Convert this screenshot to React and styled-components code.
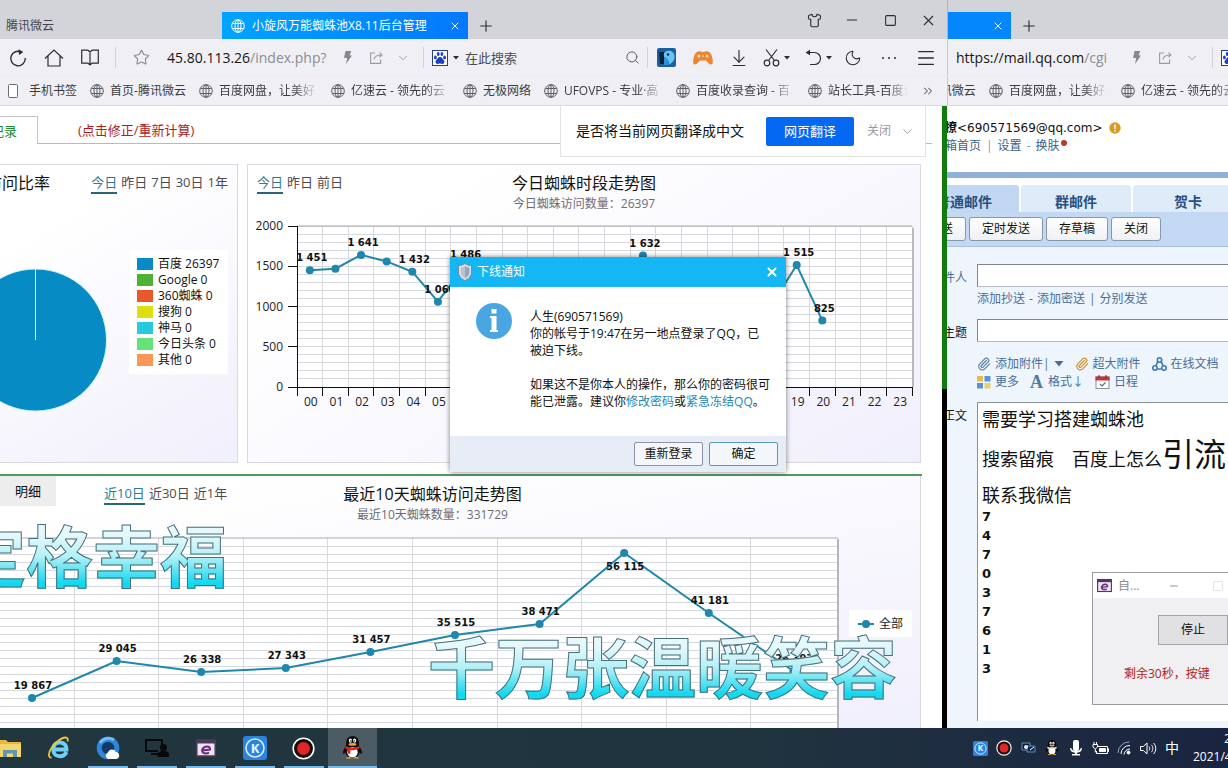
import React from 'react'
import styled, { createGlobalStyle, css } from 'styled-components'
import {
  ArrowDownToLine, ChevronDown, ChevronsRight, Menu, Minus, Moon, MoreHorizontal,
  Paperclip, Plus, Search, Shirt, Square, Star, X
} from 'lucide-react'

const ui = '"Open Sans", "Noto Sans CJK SC", sans-serif'

const GlobalStyle = createGlobalStyle`
  * { box-sizing: border-box; }
  body { margin: 0; overflow: hidden; background: #000; }
  body, button, input { font-family: ${ui}; font-size: 12px; line-height: 18px; color: #222; }
  button { margin: 0; padding: 0; border: 0; background: none; cursor: pointer; }
  a { text-decoration: none; color: inherit; }
  p, h2 { margin: 0; font-weight: 400; }
  svg { display: block; flex: none; }
`

/* ---------- desktop ---------- */

const Desktop = styled.div`
  position: relative;
  display: flex;
  flex-direction: column;
  height: 100vh;
  overflow: hidden;
`

const Windows = styled.div`
  flex: 1;
  min-height: 0;
  display: grid;
  grid-template-columns: minmax(0, 1fr) 281px;
`

const BrowserWindow = styled.section`
  display: flex;
  flex-direction: column;
  min-width: 0;
  overflow: hidden;
  background: #fff;
`

/* ---------- browser chrome ---------- */

const TabStrip = styled.div`
  display: flex;
  flex: none;
  height: 39px;
  background: #d3d4d9;
  border-left: ${p => p.$edge ? '1px solid #b4b5ba' : '0'};
`

const IdleTab = styled.button`
  flex: none;
  width: 222px;
  padding: 12px 0 0 6px;
  text-align: left;
  color: #44464c;
`

const ActiveTab = styled.div`
  display: flex;
  align-items: center;
  flex: none;
  gap: 7px;
  width: ${p => p.$short ? 63 : 246}px;
  margin-top: 12px;
  padding: 0 7px 0 9px;
  color: #fff;
  background: ${p => p.$short ? '#0486fd' : 'linear-gradient(90deg, #00a4ff, #0478fc)'};
  span { flex: 1; white-space: nowrap; }
`

const IconButton = styled.button`
  display: flex;
  align-items: center;
  justify-content: center;
  flex: none;
  gap: 4px;
  width: ${p => p.$w || 36}px;
  color: ${p => p.$color || '#2b2d33'};
`

const NewTabButton = styled(IconButton)`
  margin-top: 12px;
`

const WindowButtons = styled.div`
  display: flex;
  height: 40px;
  margin-left: auto;
`

const ToolBar = styled.div`
  display: flex;
  align-items: stretch;
  flex: none;
  height: 37px;
  overflow: hidden;
  background: #f0f0f4;
  border-left: ${p => p.$edge ? '1px solid #c8c9ce' : '0'};
`

const Divider = styled.i`
  flex: none;
  width: 1px;
  margin: 8px 7px;
  background: #d2d3d8;
`

const AddressBox = styled.div`
  display: flex;
  align-items: center;
  flex: none;
  width: 167px;
  margin-left: 8px;
  overflow: hidden;
  white-space: nowrap;
  font-size: 14px;
  color: #8a8c92;
  b { font-weight: 400; color: #15161a; }
`

const SearchInput = styled.input`
  flex: 1;
  min-width: 0;
  padding: 0 0 0 2px;
  border: 0;
  outline: 0;
  background: none;
  font-size: 13px;
  &::placeholder { color: #4a4c52; opacity: 1; }
`

const BookmarkBar = styled.nav`
  display: flex;
  align-items: center;
  flex: none;
  gap: 13px;
  height: 30px;
  padding-left: ${p => p.$edge ? 0 : 6}px;
  overflow: hidden;
  color: #3a3c42;
  background: #f0f0f4;
  border-left: ${p => p.$edge ? '1px solid #c8c9ce' : '0'};
  border-top: 1px solid #ececf0;
  border-bottom: 1px solid #dcdce0;
`

const Bookmark = styled.a`
  display: flex;
  align-items: center;
  flex: none;
  gap: 6px;
  color: #3a3c42;
  margin-left: ${p => p.$shift || 0}px;
  svg { color: #5d5f65; }
  span {
    width: ${p => p.$fade ? p.$fade + 'px' : 'auto'};
    overflow: hidden;
    white-space: nowrap;
    ${p => p.$fade && css`mask-image: linear-gradient(90deg, #000 75%, transparent);`}
  }
`

const MoreMarks = styled.button`
  display: flex;
  margin: 0 12px 0 auto;
`

/* ---------- statistics page ---------- */

const PageArea = styled.div`
  flex: 1;
  min-height: 0;
  display: flex;
`

const ScreenEdge = styled.div`
  flex: none;
  width: 5px;
  background: linear-gradient(#107c10 0 283px, #000 283px);
`

const Page = styled.main`
  position: relative;
  flex: 1;
  min-width: 0;
  display: flex;
  flex-direction: column;
  overflow: hidden;
  background: #fff;
`

const RecordRow = styled.div`
  display: flex;
  flex: none;
  height: 38px;
  padding-top: 10px;
  font-size: 13px;
  line-height: 28px;
`

const RecordTab = styled.button`
  flex: none;
  width: 38px;
  display: flex;
  justify-content: flex-end;
  overflow: hidden;
  padding-right: 20px;
  border: solid #c2c2c8;
  border-width: 1px 1px 0 0;
  font-size: 13px;
  line-height: 28px;
  color: #1f8a2c;
  white-space: nowrap;
`

const RecordNote = styled.div`
  flex: 1;
  margin-right: 10px;
  padding-left: 40px;
  border-bottom: 1px solid #b8b8bd;
  a { color: #b0201c; }
`

const TranslateBar = styled.div`
  position: absolute;
  top: 0;
  right: 16px;
  display: flex;
  align-items: center;
  width: 366px;
  height: 51px;
  padding: 0 10px 0 15px;
  background: #fff;
  border: 1px solid #e3e3e6;
  border-top: 0;
  font-size: 14px;
  color: #111;
  p { flex: 1; white-space: nowrap; }
`

const TranslateButton = styled.button`
  width: 88px;
  height: 29px;
  margin-right: 13px;
  border-radius: 2px;
  background: #0468f2;
  color: #fff;
  font-size: 13px;
`

const CloseText = styled.button`
  display: flex;
  align-items: center;
  gap: 9px;
  color: #9a9a9e;
`

const PanelRow = styled.div`
  display: grid;
  grid-template-columns: 238px minmax(0, 1fr);
  gap: 9px;
  flex: none;
  margin: 20px 21px 11px 0;
`

const Panel = styled.section`
  height: 299px;
  overflow: hidden;
  border: 1px solid #d9d8e0;
  border-left-width: ${p => p.$cut ? 0 : 1}px;
  background: linear-gradient(150deg, #fff 20%, #f0effc);
`

const PanelHead = styled.header`
  display: grid;
  grid-template-columns: ${p => p.$pie ? '50px 1fr' : '1fr auto 1fr'};
  align-items: start;
  padding: ${p => p.$pie ? '8px 9px 0 0' : '8px 9px 0'};
`

const PanelTitle = styled.div`
  text-align: center;
  white-space: nowrap;
  h2 { font-size: 16px; line-height: 20px; color: #111; }
  p { line-height: 22px; color: #6c6c74; }
`

const CutTitle = styled(PanelTitle)`
  display: flex;
  justify-content: flex-end;
  overflow: hidden;
`

const RangeLinks = styled.nav`
  display: flex;
  justify-content: ${p => p.$end ? 'flex-end' : 'flex-start'};
  gap: 4px;
  font-size: 13px;
  white-space: nowrap;
`

const RangeLink = styled.a`
  line-height: 19px;
  color: ${p => p.$on ? '#2e7a96' : '#4b4b50'};
  border-bottom: 2px solid ${p => p.$on ? '#2b6578' : 'transparent'};
`

const PieBody = styled.div`
  display: flex;
  align-items: flex-start;
  gap: 22px;
  padding-top: 56px;
  > svg { margin-top: 18px; }
`

const Legend = styled.ul`
  flex: 1;
  margin: 0 9px 0 0;
  padding: 6px 8px;
  list-style: none;
  background: #fff;
`

const LegendRow = styled.li`
  display: flex;
  align-items: center;
  gap: 5px;
  height: 16px;
  color: #111;
  white-space: nowrap;
  i { width: 16px; height: 12px; background: ${p => p.$color}; }
`

const ChartSvg = styled.svg`
  width: 100%;
  height: auto;
  font-family: ${ui};
  font-size: 12px;
`

const PointLabels = styled.g`
  fill: #111;
  font: 700 10px "DejaVu Sans", sans-serif;
  text-anchor: middle;
`

const TenDays = styled.section`
  flex: 1;
  min-height: 0;
  margin-right: 20px;
  overflow: hidden;
  border-top: 2px solid #4f9a5f;
`

const TenDaysBody = styled.div`
  height: 100%;
  margin-right: 1px;
  border-right: 1px solid #d9d8e0;
  background: linear-gradient(170deg, #fff 10%, #f0effc);
`

const TenDaysHead = styled.header`
  display: grid;
  grid-template-columns: 1fr auto 1fr;
  align-items: start;
  padding-right: 55px;
  margin-bottom: 11px;
  ${PanelTitle}, ${RangeLinks} { padding-top: 8px; }
`

const HeadLeft = styled.div`
  display: flex;
  align-items: flex-start;
  gap: 48px;
`

const DetailTab = styled.button`
  width: 56px;
  height: 30px;
  background: #ededee;
  font-size: 13px;
  color: #111;
`

const TenDaysChart = styled.div`
  display: flex;
  align-items: flex-start;
  gap: 7px;
  padding-right: 8px;
`

const ChartBox = styled.div`
  flex: 1;
  min-width: 0;
`

const SeriesKey = styled.div`
  display: flex;
  align-items: center;
  justify-content: center;
  gap: 5px;
  flex: none;
  width: 63px;
  height: 27px;
  margin-top: 73px;
  background: #fff;
`

const Lyric = styled.p`
  position: absolute;
  left: ${p => p.$left}px;
  top: ${p => p.$top}px;
  font: 700 67px/72px "Noto Sans CJK SC", sans-serif;
  white-space: nowrap;
  color: transparent;
  background: linear-gradient(#e6f8fb 25%, #b4f0f6 55%, #12d8f0 92%);
  background-clip: text;
  -webkit-text-stroke: 1px #47707c;
`

/* ---------- mail page ---------- */

const MailHead = styled.header`
  flex: none;
  height: 66px;
  padding-top: 13px;
  overflow: hidden;
  white-space: nowrap;
`

const MailUser = styled.div`
  display: flex;
  align-items: center;
  gap: 6px;
  margin-left: -2px;
  font-family: "DejaVu Sans", "Noto Sans CJK SC", sans-serif;
  color: #111;
`

const MailLinks = styled.div`
  display: flex;
  gap: 5px;
  margin-left: -14px;
  color: #8a97a8;
  a { color: #3a5f8c; }
  i { width: 6px; height: 6px; margin: 3px 0 0 -4px; border-radius: 3px; background: #b8392c; }
`

const MailTabs = styled.nav`
  display: flex;
  align-items: flex-end;
  flex: none;
  gap: 2px;
  height: 40px;
  border-top: 6px solid #8fb0d9;
  overflow: hidden;
`

const MailTab = styled.button`
  flex: none;
  width: 110px;
  height: 27px;
  padding-top: 6px;
  border-radius: 3px 3px 0 0;
  background: ${p => p.$on ? '#c2d8f2' : '#dfebf9'};
  font-size: 14px;
  font-weight: 700;
  color: #2a5080;
  &:first-child { margin-left: -38px; }
`

const MailActions = styled.div`
  display: flex;
  align-items: center;
  flex: none;
  gap: 3px;
  height: 35px;
  overflow: hidden;
  background: #c3d8f2;
  border-bottom: 1px solid #aac1dd;
`

const MailButton = styled.button`
  flex: none;
  width: ${p => p.$w}px;
  height: 24px;
  border: 1px solid #8897aa;
  border-radius: 3px;
  background: linear-gradient(#fff, #f0f1f4);
  color: #111;
  &:first-child { margin-left: -31px; }
`

const MailForm = styled.form`
  flex: 1;
  min-height: 0;
  display: grid;
  grid-template-columns: 20px minmax(0, 1fr);
  grid-template-rows: 55px auto 1fr;
  column-gap: 10px;
  padding: 17px 0 7px;
  background: #eef5fd;
`

const FieldLabel = styled.label`
  display: flex;
  justify-content: flex-end;
  overflow: hidden;
  padding-top: 5px;
  white-space: nowrap;
  color: ${p => p.$link ? '#4a6e98' : '#111'};
`

const MailInput = styled.input`
  display: block;
  width: 100%;
  height: 23px;
  border: 1px solid #80868e;
  border-right: 0;
  border-bottom-color: #b5bcc6;
  border-radius: 0;
  background: #fff;
`

const CcLinks = styled.div`
  display: flex;
  gap: 4px;
  margin-top: 3px;
  white-space: nowrap;
  color: #4a6e98;
`

const AttachTools = styled.div`
  margin: 13px 0 11px;
`

const ToolRow = styled.div`
  display: flex;
  gap: 11px;
  overflow: hidden;
`

const Tool = styled.a`
  display: flex;
  align-items: center;
  flex: none;
  gap: 4px;
  color: #4a6e98;
`

const Editor = styled.div`
  min-height: 0;
  padding: 1px 4px;
  overflow: hidden;
  border: 1px solid #8a9098;
  border-width: 1px 0 0 1px;
  background: #fff;
  color: #111;
  white-space: nowrap;
  font-size: 18px;
  outline: 0;
`

const EditorLine = styled.p`
  line-height: ${p => p.$h}px;
  big { font-size: 32px; line-height: 40px; }
`

const EditorDigit = styled.p`
  font: 700 13px/19px "DejaVu Sans", sans-serif;
`

/* ---------- floating windows ---------- */

const Notice = styled.div`
  position: absolute;
  left: 450px;
  top: 257px;
  display: flex;
  flex-direction: column;
  width: 336px;
  height: 215px;
  background: #fff;
  box-shadow: 0 0 5px rgba(0, 0, 0, .5);
`

const NoticeTitle = styled.div`
  display: flex;
  align-items: center;
  gap: 5px;
  height: 30px;
  padding: 0 6px 0 8px;
  background: #14b6f4;
  color: #fff;
  span { flex: 1; }
`

const NoticeBody = styled.div`
  flex: 1;
  display: flex;
  gap: 18px;
  padding: 16px 0 0 26px;
  color: #111;
  white-space: nowrap;
  div { padding-top: 5px; }
  p { line-height: 17px; margin-bottom: 17px; }
  a { color: #2a86ac; }
`

const NoticeFoot = styled.div`
  display: flex;
  align-items: center;
  justify-content: flex-end;
  gap: 6px;
  height: 36px;
  padding-right: 8px;
  background: #e6edf7;
`

const NoticeButton = styled.button`
  width: 69px;
  height: 24px;
  border: 1px solid ${p => p.$main ? '#5a9cb8' : '#8d90a6'};
  border-radius: 2px;
  background: #f3f6fb;
  color: #111;
`

const Helper = styled.div`
  position: absolute;
  right: 0;
  top: 572px;
  width: 136px;
  height: 133px;
  overflow: hidden;
  border: 1px solid #9b9b9f;
  border-right: 0;
  background: #f0eff1;
`

const HelperTitle = styled.div`
  display: flex;
  align-items: center;
  gap: 6px;
  height: 25px;
  padding: 0 4px;
  background: #fff;
  color: #8b8b8f;
  span { flex: 1; }
  svg:nth-of-type(2) { margin-right: 26px; }
`

const HelperButton = styled.button`
  display: block;
  width: 70px;
  height: 30px;
  margin: 17px 0 0 auto;
  border: 1px solid #a3a3a8;
  background: #e1e0e3;
  color: #111;
`

const HelperNote = styled.p`
  margin: 20px 0 0 31px;
  color: #b01f22;
`

/* ---------- taskbar ---------- */

const TaskBar = styled.footer`
  display: flex;
  flex: none;
  height: 40px;
  overflow: hidden;
  background: linear-gradient(90deg, #22363f, #20343f 60%, #1a2440);
`

const TaskButton = styled.button`
  display: flex;
  align-items: center;
  justify-content: center;
  flex: none;
  width: 49px;
  background: ${p => p.$on ? '#4b5c64' : 'none'};
  box-shadow: ${p => p.$on ? 'inset 0 -2px #76b9ed' : 'none'};
  &:first-child { margin-left: -15px; }
  ${p => p.$open && css`
    background: linear-gradient(#76b9ed, #76b9ed) center bottom / 40px 2px no-repeat;
  `}
`

const Tray = styled.div`
  display: flex;
  align-items: center;
  margin-left: auto;
  color: #fff;
`

const TrayButton = styled.button`
  display: flex;
  align-items: center;
  justify-content: center;
  width: 24px;
  color: #fff;
  font-size: 14px;
`

const Clock = styled.div`
  width: 44px;
  margin-left: 9px;
  margin-right: -9px;
  font-size: 12px;
  text-align: left;
  white-space: nowrap;
  time { display: block; }
  time:first-child { padding-left: 31px; }
`

/* ---------- icons ---------- */

const GlobeIcon = () => (
  <svg width="14" height="14" viewBox="0 0 14 14" fill="none" stroke="currentColor">
    <circle cx="7" cy="7" r="6.3" />
    <ellipse cx="7" cy="7" rx="3" ry="6.3" />
    <path d="M7 .7v12.6M1.4 4.5h11.2M1.4 9.5h11.2" />
  </svg>
)

const ReloadIcon = () => (
  <svg width="18" height="18" viewBox="0 0 18 18" fill="none" stroke="currentColor" strokeWidth="1.4">
    <path d="M12.6 3.2A7.3 7.3 0 1 0 16.3 9" />
    <path d="M9.4 .2l5 2.7-4.4 3.2z" fill="currentColor" stroke="none" />
  </svg>
)

const HomeIcon = () => (
  <svg width="20" height="18" viewBox="0 0 20 18" fill="none" stroke="currentColor" strokeWidth="1.2">
    <path d="M1 9.5L10 1l9 8.5M4 7v10h12V7" />
  </svg>
)

const BookIcon = () => (
  <svg width="18" height="17" viewBox="0 0 18 17" fill="none" stroke="currentColor" strokeWidth="1.2">
    <path d="M.7 1.2h6.2L9 3l2.1-1.8h6.2v13H11L9 16l-2-1.8H.7zM9 3v13" />
  </svg>
)

const BoltIcon = () => (
  <svg width="8" height="13" viewBox="0 0 8 13" fill="#85878d">
    <path d="M1.6 0h5.6L5.6 4.6H8L2 13l1.2-6H0z" />
  </svg>
)

const ShareIcon = () => (
  <svg width="13" height="12" viewBox="0 0 13 12" fill="none" stroke="#9a9ca2" strokeWidth="1.1">
    <path d="M5 1H.6v10.4h10V7.6M4 7.4C4.4 4.6 6.4 3 11.6 3M9.4 .6L12 3 9.4 5.4" />
  </svg>
)

const PawIcon = () => (
  <svg width="16" height="16" viewBox="0 0 16 16">
    <rect x=".5" y=".5" width="15" height="15" fill="#fff" stroke="#25408f" />
    <g fill="#1c3fc0">
      <ellipse cx="3.4" cy="7.4" rx="1.4" ry="1.9" />
      <ellipse cx="6.2" cy="4.1" rx="1.4" ry="2" />
      <ellipse cx="9.9" cy="4.1" rx="1.4" ry="2" />
      <ellipse cx="12.6" cy="7.4" rx="1.4" ry="1.9" />
      <path d="M8 7c2 0 2.6 2 3.9 3.2 1.3 1.4.4 3.7-1.5 3.7-1 0-1.5-.4-2.4-.4s-1.4.4-2.4.4c-1.9 0-2.8-2.3-1.5-3.7C5.4 9 6 7 8 7z" />
    </g>
  </svg>
)

const Caret = ({ w = 6 }) => (
  <svg width={w} height={w / 2 + 1} viewBox="0 0 6 4" fill="currentColor"><path d="M0 0h6L3 3.6z" /></svg>
)

const PictureIcon = () => (
  <svg width="19" height="19" viewBox="0 0 19 19">
    <rect width="19" height="19" rx="2" fill="#1b5f9e" />
    <path d="M2 4h6l-1 12H3z" fill="#0b2140" />
    <path d="M7 5c4-4 10-2 10.5 3 .5 4-2 7-6 9 1-3 0-5-3-6-1.5-1-2-4-1.500-6z" fill="#63c6f5" />
    <path d="M7 9c3 0 5 3 4 8H7z" fill="#2b93d8" />
    <circle cx="11" cy="6.5" r="1.2" fill="#0b2140" />
  </svg>
)

const GameIcon = () => (
  <svg width="20" height="14" viewBox="0 0 20 14">
    <path d="M5 .5C7 0 8 1 10 1s3-1 5-.5c3.5 1 5 7 4.8 11-.3 2.5-2.3 2.7-4 1L13 9.5H7l-2.8 3c-1.7 1.7-3.7 1.5-4-1C0 7.5 1.5 1.5 5 .5z" fill="#ef8530" />
    <circle cx="6" cy="5" r="1.5" fill="#ffe6cc" /><circle cx="14" cy="5" r="1.5" fill="#ffe6cc" />
    <circle cx="10" cy="5" r="1" fill="#ffd9b0" />
  </svg>
)

const ScissorsIcon = () => (
  <svg width="17" height="18" viewBox="0 0 17 18" fill="none" stroke="currentColor" strokeWidth="1.2">
    <circle cx="4" cy="14" r="2.8" /><circle cx="13" cy="14" r="2.8" />
    <path d="M3 .5l8.500 11M14 .5L5.5 11.5" />
  </svg>
)

const UndoIcon = () => (
  <svg width="17" height="17" viewBox="0 0 17 17" fill="none" stroke="currentColor" strokeWidth="1.2">
    <path d="M3 3.5h6.5a6 6 0 1 1 0 12H5" />
    <path d="M.5 3.5L5 .7v5.6z" fill="currentColor" stroke="none" />
  </svg>
)

const DotsIcon = () => (
  <svg width="16" height="4" viewBox="0 0 16 4" fill="currentColor">
    <circle cx="2" cy="2" r="1" /><circle cx="8" cy="2" r="1" /><circle cx="14" cy="2" r="1" />
  </svg>
)

const PhoneIcon = () => (
  <svg width="17" height="14" viewBox="0 0 17 14" fill="#fff" stroke="#6b6d73">
    <rect x="2.5" y=".5" width="9" height="13" rx="1" />
  </svg>
)

const ShieldIcon = () => (
  <svg width="14" height="18" viewBox="0 0 14 18">
    <path d="M7 .5c2 1.5 4 2 6.5 2V9c0 4-3 7-6.5 8.5C3.5 16 .5 13 .5 9V2.5C3 2.5 5 2 7 .5z" fill="#dfe3ea" stroke="#7d8796" />
    <path d="M7 3c1.3.9 2.6 1.3 4.5 1.4V9c0 3-2 5-4.5 6.2z" fill="#9aa6b8" />
    <path d="M7 3C5.7 3.9 4.4 4.3 2.5 4.4V9c0 3 2 5 4.5 6.2z" fill="#b9c4d3" />
  </svg>
)

const InfoIcon = () => (
  <svg width="36" height="36" viewBox="0 0 36 36">
    <circle cx="18" cy="18" r="18" fill="#4aa6e2" />
    <path d="M15.500 6h5v4.500h-5zM15.500 13h5v16h-5z" fill="#fff" />
    <path d="M14 13h2v2h-2zM14 27h8v2h-8z" fill="#fff" />
  </svg>
)

const ScriptIcon = ({ size = 16 }) => (
  <svg width={size} height={size} viewBox="0 0 20 20">
    <rect x=".8" y="2" width="18.4" height="16" fill="#efe3f2" stroke="#4d3a5a" strokeWidth="1.5" />
    <path d="M1 2h18v3.5H1z" fill="#4d3a5a" />
    <path d="M6 12.5l8-1c.5-4-5.5-4-7.5-.5-1.5 3.5 2 5.5 6.5 3.8" fill="none" stroke="#6c2a80" strokeWidth="2" />
  </svg>
)

const ShareDocIcon = () => (
  <svg width="15" height="14" viewBox="0 0 15 14" fill="none" stroke="#3d78b8" strokeWidth="1.6">
    <circle cx="7.5" cy="3" r="2.2" /><circle cx="3" cy="11" r="2.2" /><circle cx="12" cy="11" r="2.2" />
    <path d="M5.8 4.6L3.8 8.8M9.2 4.6l2 4.2M5.5 12h4" />
  </svg>
)

const TilesIcon = () => (
  <svg width="14" height="14" viewBox="0 0 14 14">
    <path d="M0 1h6v5.5H0z" fill="#e8b94f" /><path d="M7.5 1h6v5.5h-6z" fill="#5f93cf" />
    <path d="M0 8h6v5.5H0z" fill="#5f93cf" /><path d="M7.5 8h6v5.5h-6z" fill="#e8cf6f" />
  </svg>
)

const FormatIcon = () => (
  <svg width="14" height="14" viewBox="0 0 14 14">
    <text x="0" y="13" fontFamily="Liberation Serif, serif" fontWeight="700" fontSize="18" fill="#4d7c9c">A</text>
  </svg>
)

const CalendarIcon = () => (
  <svg width="15" height="14" viewBox="0 0 15 14">
    <rect x="1" y="2" width="13" height="11.5" fill="#fff" stroke="#8a8f99" />
    <path d="M.5 1.5h14v4H.5z" fill="#c2373c" />
    <path d="M4 0v3M11 0v3" stroke="#6b2024" />
    <path d="M5 9l2 2 3.5-3.5" fill="none" stroke="#5f6c80" strokeWidth="1.2" />
  </svg>
)

const WarnIcon = () => (
  <svg width="12" height="12" viewBox="0 0 12 12">
    <circle cx="6" cy="6" r="5.7" fill="#dc9a1e" />
    <path d="M5.2 2.5h1.6V7H5.2zM5.2 8h1.6v1.6H5.2z" fill="#fff" />
  </svg>
)

const FolderIcon = () => (
  <svg width="24" height="20" viewBox="0 0 24 20">
    <path d="M0 2h8l2 2h13v15H0z" fill="#e8b83e" /><path d="M0 6h23v13H0z" fill="#f7d56e" />
    <path d="M5 19v-7h14v7h-4v-3.5H9V19z" fill="#5e97b5" />
  </svg>
)

const IeIcon = () => (
  <svg width="24" height="24" viewBox="0 0 24 24" fill="none">
    <path d="M19.5 16c-1.5 3-4 4.5-7 4.3-4-.3-6.5-3.5-6.3-7.5.3-4 3.3-6.5 7-6.3 4 .2 6.600 3 6.300 7H7" stroke="#6fd0f3" strokeWidth="4" />
    <path d="M4.5 21.5C1 22 1 17 4.5 12 9 5 17 0 20 2c1 .7 1 2 .4 3.5" stroke="#ecc739" strokeWidth="1.8" />
  </svg>
)

const QBrowserIcon = () => (
  <svg width="24" height="24" viewBox="0 0 24 24">
    <circle cx="12" cy="12" r="8.8" fill="#123a66" stroke="#2f86dc" strokeWidth="5" />
    <path d="M4 7a10 10 0 0 1 14-3" stroke="#6fbdf7" strokeWidth="3" fill="none" />
    <path d="M12 23a3.5 3.5 0 0 1 0-6.5c1-4 6.5-4 7.5-.8C24 16 24.5 22 20.5 23z" fill="#fff" />
  </svg>
)

const RemoteIcon = () => (
  <svg width="24" height="20" viewBox="0 0 24 20" fill="#07090b">
    <path d="M0 1h18v7h-2V3H2v9h11v2H0zM6 15h7v2H6z" />
    <circle cx="18.5" cy="9.5" r="3.5" /><path d="M12.5 19v-2c0-3 2-4 6-4s5.5 1 5.5 4v2z" />
  </svg>
)

const KIcon = ({ size = 24 }) => (
  <svg width={size} height={size} viewBox="0 0 24 24">
    <rect width="24" height="24" rx="3" fill="#2b83df" />
    <circle cx="12" cy="12" r="9" fill="none" stroke="#cfeeff" strokeWidth="1.6" />
    <text x="12" y="16.5" textAnchor="middle" fontFamily="Open Sans, sans-serif" fontWeight="700" fontSize="13" fill="#e6f8ff">K</text>
  </svg>
)

const RecordIcon = ({ size = 23 }) => (
  <svg width={size} height={size} viewBox="0 0 23 23">
    <circle cx="11.5" cy="11.5" r="10.3" fill="#1a0c0c" stroke="#fff" strokeWidth="1.6" />
    <circle cx="11.5" cy="11.5" r="6.5" fill="#e0262b" />
  </svg>
)

const PenguinIcon = ({ w = 21, scarf = '#d8262c' }) => (
  <svg width={w} height={w * 1.1} viewBox="0 0 20 22">
    <path d="M10 0c4 0 6 3 6 6.5 0 2 0 2.5 1.5 5 1 1.7 2 4 1.3 5.5-.6.5-1.3-.3-2-1.5C16 19 13.500 21 10 21s-6-2-6.8-5.5c-.7 1.2-1.4 2-2 1.5-.7-1.5.3-3.8 1.3-5.5C4 9 4 8.5 4 6.5 4 3 6 0 10 0z" fill="#0b0b0d" />
    <ellipse cx="10" cy="15.5" rx="5" ry="5" fill="#fff" />
    <ellipse cx="8" cy="4.5" rx="1.5" ry="2" fill="#fff" /><ellipse cx="12" cy="4.5" rx="1.5" ry="2" fill="#fff" />
    <circle cx="8.4" cy="4.8" r=".7" /><circle cx="11.6" cy="4.8" r=".7" />
    <ellipse cx="10" cy="8" rx="3.8" ry="1.3" fill="#eea42a" />
    <path d="M3.6 9.5c4 2 8.8 2 12.8 0l.6 2.2c-4 2-6.5 2-9 1.8V17H5.5v-4L3 11.8z" fill={scarf} />
    <path d="M4 21.5c0-2 4-2 5.5 0zM10.5 21.5c1.5-2 5.5-2 5.5 0z" fill="#eea42a" />
  </svg>
)

const MonitorsIcon = () => (
  <svg width="15" height="14" viewBox="0 0 15 14">
    <path d="M1 2h8v7H1z" fill="#0c1a30" stroke="#6a8fb8" /><path d="M6 5h8v6H6z" fill="#0f2748" stroke="#5f88b8" />
    <circle cx="5" cy="6" r="2" fill="#e8f0f8" /><path d="M9 9l4-3" stroke="#fff" />
  </svg>
)

const MicIcon = () => (
  <svg width="12" height="16" viewBox="0 0 12 16" fill="#fff">
    <rect x="3" width="6" height="11" rx="2" /><path d="M0 8h1.2c.4 4 9.2 4 9.6 0H12c0 3-2 4.5-5 4.8V14h3v1.5H2V14h3v-1.2C2 12.5 0 11 0 8z" />
  </svg>
)

const PowerIcon = () => (
  <svg width="17" height="13" viewBox="0 0 17 13" fill="none" stroke="#fff">
    <path d="M5 4.5h10.5v7H4.5V9M15.5 6.500h1v3h-1" /><path d="M7.5 6.5h6v3h-6z" fill="#fff" />
    <path d="M1 2.5h4.5V5L3.3 7 1 5zM2 0v2.5M4.5 0v2.5M3.3 7v3h1" />
  </svg>
)

const WifiIcon = () => (
  <svg width="14" height="14" viewBox="0 0 14 14" fill="none" stroke="#fff">
    <path d="M1 12A11 11 0 0 1 12.5 1" stroke="#9aa5b0" /><path d="M4 13a8.5 8.5 0 0 1 9-8.5M7 13.5a6 6 0 0 1 6-5.5" />
    <circle cx="11.5" cy="11.5" r="1.5" fill="#fff" />
  </svg>
)

const SpeakerIcon = () => (
  <svg width="17" height="13" viewBox="0 0 17 13" fill="none" stroke="#fff">
    <path d="M.5 4.5h2.8L7 1v11L3.3 8.5H.5zM9 4.5c1 1 1 3 0 4M11.3 2.8c2 2 2 5.5 0 7.4M13.5 1c3 3 3 8 0 11" />
  </svg>
)

/* ---------- data ---------- */

const bookmarks = [
  { text: '首页-腾讯微云' },
  { text: '百度网盘，让美好', fade: 99 },
  { text: '亿速云 - 领先的云', fade: 99 },
  { text: '无极网络' },
  { text: 'UFOVPS - 专业·高', fade: 99 },
  { text: '百度收录查询 - 百', fade: 99 },
  { text: '站长工具-百度词', fade: 80 }
]

const engines = [
  ['百度 26397', '#078bc4'],
  ['Google 0', '#50b033'],
  ['360蜘蛛 0', '#e8582a'],
  ['搜狗 0', '#dddf10'],
  ['神马 0', '#28c9e0'],
  ['今日头条 0', '#66e27b'],
  ['其他 0', '#fa9658']
]

const hourly = [1451, 1470, 1641, 1560, 1432, 1060, 1486, 1300, 1250, 1320, 1280, 1350, 1400, 1632, 1450, 1380, 1300, 1200, 1010, 1515, 825]
const hourlyLabels = [0, 2, 4, 5, 6, 13, 19, 20]

const daily = [
  ['19 867', 161], ['29 045', 124], ['26 338', 135], ['27 343', 131], ['31 457', 115],
  ['35 515', 98], ['38 471', 87], ['56 115', 16], ['41 181', 76], ['26 397', 134]
]

const digits = ['7', '4', '7', '0', '3', '7', '6', '1', '3']

const range = n => Array.from({ length: n }, (_, i) => i)
const blue = '#1f86ac'

/* ---------- parts ---------- */

function HourChart() {
  const left = 49, right = 664, top = 11, bottom = 172
  const step = (right - left) / 24
  const x = i => left + step * (i + 0.5)
  const y = v => bottom - v * (bottom - top) / 2000
  return (
    <ChartSvg viewBox="0 0 672 200">
      <rect x={left} y={top} width={right - left} height={bottom - top} fill="#fff" />
      <g stroke="#d8d8e0" shapeRendering="crispEdges">
        {range(20).map(i => <path key={i} d={`M${left} ${y(i * 100 + 100)}H${right}`} />)}
        {range(24).map(i => <path key={i} d={`M${left + step * (i + 1)} ${top}V${bottom}`} />)}
      </g>
      <path d={`M${left} ${top}H${right}`} stroke="#a9a9b0" />
      <path d={`M${right + 1} ${top + 2}V${bottom}`} stroke="#b9b9be" strokeWidth="2" />
      <g stroke="#111" shapeRendering="crispEdges">
        <path d={`M${left} ${top}V${bottom}H${right}`} fill="none" />
        {range(5).map(i => <path key={i} d={`M${left - 9} ${y(i * 500)}H${left}`} />)}
        {range(25).map(i => <path key={i} d={`M${left + step * i} ${bottom}v9`} />)}
      </g>
      <g fill="#222" textAnchor="end">
        {range(5).map(i => <text key={i} x={left - 14} y={y(i * 500) + 4}>{i * 500}</text>)}
      </g>
      <g fill="#222" textAnchor="middle">
        {range(24).map(i => <text key={i} x={x(i) + 1} y={bottom + 19}>{String(i).padStart(2, '0')}</text>)}
      </g>
      <polyline points={hourly.map((v, i) => `${x(i)},${y(v)}`).join(' ')} fill="none" stroke={blue} strokeWidth="2" />
      {hourly.map((v, i) => <circle key={i} cx={x(i)} cy={y(v)} r="4" fill={blue} />)}
      <PointLabels>
        {hourlyLabels.map(i => (
          <text key={i} x={x(i) + 2} y={y(hourly[i]) - 9}>{String(hourly[i]).replace(/^(\d)(\d{3})$/, '$1 $2')}</text>
        ))}
      </PointLabels>
    </ChartSvg>
  )
}

function DayChart() {
  const xs = daily.map((_, i) => 32 + i * 84.6)
  return (
    <ChartSvg viewBox="0 0 842 200">
      <rect width="838" height="200" fill="#fff" />
      <g stroke="#d8d8e0" shapeRendering="crispEdges">
        {range(24).map(i => <path key={i} d={`M0 ${9 + i * 8}H838`} />)}
        {range(9).map(i => <path key={i} d={`M${74 + i * 84.6} 1V200`} />)}
      </g>
      <path d="M0 1H838" stroke="#a9a9b0" />
      <path d="M838 2V200" stroke="#b5b5bb" strokeWidth="2" />
      <polyline points={daily.map((d, i) => `${xs[i]},${d[1]}`).join(' ')} fill="none" stroke={blue} strokeWidth="2" />
      {daily.map((d, i) => <circle key={i} cx={xs[i]} cy={d[1]} r="4" fill={blue} />)}
      <PointLabels>
        {daily.map((d, i) => <text key={i} x={xs[i] + 1} y={i === 7 ? d[1] + 17 : d[1] - 9}>{d[0]}</text>)}
      </PointLabels>
    </ChartSvg>
  )
}

function Marks({ items, shift }) {
  return items.map((b, i) => (
    <Bookmark key={b.text} href="#" $fade={b.fade} $shift={i === 0 ? shift : 0}>
      <GlobeIcon /><span>{b.text}</span>
    </Bookmark>
  ))
}

function AddressTools() {
  return (
    <>
      <IconButton $w={28} aria-label="加速"><BoltIcon /></IconButton>
      <IconButton $w={28} aria-label="分享"><ShareIcon /></IconButton>
      <IconButton $w={26} $color="#9a9ca2" aria-label="展开"><ChevronDown size={14} strokeWidth={1.6} /></IconButton>
      <Divider />
      <IconButton $w={18} aria-label="百度"><PawIcon /></IconButton>
    </>
  )
}

function StatsWindow() {
  return (
    <BrowserWindow>
      <TabStrip>
        <IdleTab>腾讯微云</IdleTab>
        <ActiveTab>
          <GlobeIcon /><span>小旋风万能蜘蛛池X8.11后台管理</span>
          <IconButton $w={12} $color="#fff" aria-label="关闭标签"><X size={12} strokeWidth={2} /></IconButton>
        </ActiveTab>
        <NewTabButton aria-label="新标签"><Plus size={18} strokeWidth={1.5} /></NewTabButton>
        <WindowButtons>
          <IconButton $w={38} aria-label="皮肤"><Shirt size={15} strokeWidth={1.8} /></IconButton>
          <IconButton $w={38} aria-label="最小化"><Minus size={16} strokeWidth={1.5} /></IconButton>
          <IconButton $w={38} aria-label="最大化"><Square size={13} strokeWidth={2} /></IconButton>
          <IconButton $w={38} aria-label="关闭"><X size={17} strokeWidth={1.5} /></IconButton>
        </WindowButtons>
      </TabStrip>
      <ToolBar>
        <IconButton aria-label="刷新"><ReloadIcon /></IconButton>
        <IconButton aria-label="主页"><HomeIcon /></IconButton>
        <IconButton aria-label="阅读"><BookIcon /></IconButton>
        <Divider />
        <IconButton $color="#8a8c92" aria-label="收藏"><Star size={17} strokeWidth={1.6} /></IconButton>
        <AddressBox><b>45.80.113.26</b>/index.php?</AddressBox>
        <AddressTools />
        <IconButton $w={14} aria-label="切换引擎"><Caret /></IconButton>
        <SearchInput placeholder="在此搜索" aria-label="搜索" />
        <IconButton $w={16} $color="#5b5d63" aria-label="搜索"><Search size={15} strokeWidth={1.6} /></IconButton>
        <Divider />
        <IconButton $w={22} aria-label="图片"><PictureIcon /></IconButton>
        <IconButton $w={52} aria-label="游戏"><GameIcon /></IconButton>
        <IconButton $w={20} aria-label="下载"><ArrowDownToLine size={20} strokeWidth={1.4} /></IconButton>
        <IconButton $w={54} aria-label="截图"><ScissorsIcon /><Caret /></IconButton>
        <IconButton $w={30} aria-label="撤销"><UndoIcon /><Caret /></IconButton>
        <IconButton $w={40} aria-label="夜间"><Moon size={18} strokeWidth={1.4} /></IconButton>
        <IconButton $w={32} aria-label="更多"><DotsIcon /></IconButton>
        <IconButton $w={42} aria-label="菜单"><Menu size={22} strokeWidth={1.4} /></IconButton>
      </ToolBar>
      <BookmarkBar>
        <Bookmark href="#"><PhoneIcon /><span>手机书签</span></Bookmark>
        <Marks items={bookmarks} />
        <MoreMarks aria-label="更多书签"><ChevronsRight size={14} strokeWidth={1.5} /></MoreMarks>
      </BookmarkBar>
      <PageArea>
        <Page>
          <RecordRow>
            <RecordTab>记录</RecordTab>
            <RecordNote><a href="#">(点击修正/重新计算)</a></RecordNote>
          </RecordRow>
          <PanelRow>
            <Panel $cut>
              <PanelHead $pie>
                <CutTitle><h2>访问比率</h2></CutTitle>
                <RangeLinks $end>
                  <RangeLink href="#" $on>今日</RangeLink>
                  <RangeLink href="#">昨日</RangeLink>
                  <RangeLink href="#">7日</RangeLink>
                  <RangeLink href="#">30日</RangeLink>
                  <RangeLink href="#">1年</RangeLink>
                </RangeLinks>
              </PanelHead>
              <PieBody>
                <svg width="107" height="144" viewBox="0 0 107 144">
                  <circle cx="35.5" cy="72" r="71" fill="#078bc4" stroke="#cdf3fb" />
                  <path d="M35.5 1v71" stroke="#dff6fa" />
                </svg>
                <Legend>
                  {engines.map(([name, color]) => <LegendRow key={name} $color={color}><i />{name}</LegendRow>)}
                </Legend>
              </PieBody>
            </Panel>
            <Panel>
              <PanelHead>
                <RangeLinks>
                  <RangeLink href="#" $on>今日</RangeLink>
                  <RangeLink href="#">昨日</RangeLink>
                  <RangeLink href="#">前日</RangeLink>
                </RangeLinks>
                <PanelTitle>
                  <h2>今日蜘蛛时段走势图</h2>
                  <p>今日蜘蛛访问数量：26397</p>
                </PanelTitle>
              </PanelHead>
              <HourChart />
            </Panel>
          </PanelRow>
          <TenDays>
            <TenDaysBody>
              <TenDaysHead>
                <HeadLeft>
                  <DetailTab>明细</DetailTab>
                  <RangeLinks>
                    <RangeLink href="#" $on>近10日</RangeLink>
                    <RangeLink href="#">近30日</RangeLink>
                    <RangeLink href="#">近1年</RangeLink>
                  </RangeLinks>
                </HeadLeft>
                <PanelTitle>
                  <h2>最近10天蜘蛛访问走势图</h2>
                  <p>最近10天蜘蛛数量：331729</p>
                </PanelTitle>
              </TenDaysHead>
              <TenDaysChart>
                <ChartBox><DayChart /></ChartBox>
                <SeriesKey>
                  <svg width="16" height="10" viewBox="0 0 16 10">
                    <path d="M0 5h16" stroke={blue} strokeWidth="2" /><circle cx="8" cy="5" r="4" fill={blue} />
                  </svg>
                  全部
                </SeriesKey>
              </TenDaysChart>
            </TenDaysBody>
          </TenDays>
          <TranslateBar>
            <p>是否将当前网页翻译成中文</p>
            <TranslateButton>网页翻译</TranslateButton>
            <CloseText>关闭 <ChevronDown size={15} strokeWidth={1.5} /></CloseText>
          </TranslateBar>
          <Lyric $left={-41} $top={411}>定格幸福</Lyric>
          <Lyric $left={428} $top={522}>千万张温暖笑容</Lyric>
        </Page>
        <ScreenEdge />
      </PageArea>
    </BrowserWindow>
  )
}

function MailWindow() {
  return (
    <BrowserWindow>
      <TabStrip $edge>
        <ActiveTab $short>
          <span />
          <IconButton $w={12} $color="#fff" aria-label="关闭标签"><X size={12} strokeWidth={2} /></IconButton>
        </ActiveTab>
        <NewTabButton aria-label="新标签"><Plus size={18} strokeWidth={1.5} /></NewTabButton>
      </TabStrip>
      <ToolBar $edge>
        <AddressBox><b>https://mail.qq.com</b>/cgi</AddressBox>
        <AddressTools />
      </ToolBar>
      <BookmarkBar $edge>
        <Marks items={bookmarks.slice(0, 3)} shift={-68} />
      </BookmarkBar>
      <MailHead>
        <MailUser><span><b>撩</b>&lt;690571569@qq.com&gt;</span><WarnIcon /></MailUser>
        <MailLinks>
          <a href="#">邮箱首页</a>|<a href="#">设置</a>-<a href="#">换肤</a><i />
        </MailLinks>
      </MailHead>
      <MailTabs>
        <MailTab $on>普通邮件</MailTab>
        <MailTab>群邮件</MailTab>
        <MailTab>贺卡</MailTab>
      </MailTabs>
      <MailActions>
        <MailButton $w={50}>发送</MailButton>
        <MailButton $w={74}>定时发送</MailButton>
        <MailButton $w={62}>存草稿</MailButton>
        <MailButton $w={50}>关闭</MailButton>
      </MailActions>
      <MailForm>
        <FieldLabel $link htmlFor="to">收件人</FieldLabel>
        <div>
          <MailInput id="to" />
          <CcLinks><a href="#">添加抄送</a>-<a href="#">添加密送</a>|<a href="#">分别发送</a></CcLinks>
        </div>
        <FieldLabel htmlFor="subject">主题</FieldLabel>
        <div>
          <MailInput id="subject" />
          <AttachTools>
            <ToolRow>
              <Tool href="#"><Paperclip size={14} color="#5d7f9f" />添加附件|<Caret w={10} /></Tool>
              <Tool href="#"><Paperclip size={14} color="#d98f1e" />超大附件</Tool>
              <Tool href="#"><ShareDocIcon />在线文档</Tool>
            </ToolRow>
            <ToolRow>
              <Tool href="#"><TilesIcon />更多</Tool>
              <Tool href="#"><FormatIcon />格式↓</Tool>
              <Tool href="#"><CalendarIcon />日程</Tool>
            </ToolRow>
          </AttachTools>
        </div>
        <FieldLabel as="span" id="body-label">正文</FieldLabel>
        <Editor role="textbox" aria-labelledby="body-label" tabIndex={0}>
          <EditorLine $h={30}>需要学习搭建蜘蛛池</EditorLine>
          <EditorLine $h={50}>搜索留痕　百度上怎么<big>引流</big></EditorLine>
          <EditorLine $h={23}>联系我微信</EditorLine>
          {digits.map((d, i) => <EditorDigit key={i}>{d}</EditorDigit>)}
        </Editor>
      </MailForm>
    </BrowserWindow>
  )
}

function App() {
  return (
    <Desktop lang="zh-CN">
      <GlobalStyle />
      <Windows>
        <StatsWindow />
        <MailWindow />
      </Windows>
      <TaskBar>
        <TaskButton aria-label="文件夹"><FolderIcon /></TaskButton>
        <TaskButton aria-label="IE"><IeIcon /></TaskButton>
        <TaskButton $open aria-label="QQ浏览器"><QBrowserIcon /></TaskButton>
        <TaskButton $open aria-label="远程"><RemoteIcon /></TaskButton>
        <TaskButton $open aria-label="脚本"><ScriptIcon size={20} /></TaskButton>
        <TaskButton $open aria-label="酷狗"><KIcon /></TaskButton>
        <TaskButton $open aria-label="录屏"><RecordIcon /></TaskButton>
        <TaskButton $on aria-label="QQ"><PenguinIcon /></TaskButton>
        <Tray>
          <TrayButton aria-label="酷狗"><KIcon size={15} /></TrayButton>
          <TrayButton aria-label="录屏"><RecordIcon size={16} /></TrayButton>
          <TrayButton aria-label="网络"><MonitorsIcon /></TrayButton>
          <TrayButton aria-label="QQ"><PenguinIcon w={14} scarf="#e8e8e8" /></TrayButton>
          <TrayButton aria-label="麦克风"><MicIcon /></TrayButton>
          <TrayButton aria-label="电源"><PowerIcon /></TrayButton>
          <TrayButton aria-label="无线"><WifiIcon /></TrayButton>
          <TrayButton aria-label="音量"><SpeakerIcon /></TrayButton>
          <TrayButton>中</TrayButton>
          <Clock><time>2</time><time>2021/4</time></Clock>
        </Tray>
      </TaskBar>
      <Helper>
        <HelperTitle>
          <ScriptIcon size={15} /><span>自...</span>
          <Minus size={12} strokeWidth={1.8} /><Square size={12} strokeWidth={1.2} color="#d0d0d4" />
        </HelperTitle>
        <HelperButton>停止</HelperButton>
        <HelperNote>剩余30秒，按键</HelperNote>
      </Helper>
      <Notice role="dialog" aria-labelledby="notice-title">
        <NoticeTitle>
          <ShieldIcon /><span id="notice-title">下线通知</span>
          <IconButton $w={16} $color="#fff" aria-label="关闭"><X size={14} strokeWidth={3.5} /></IconButton>
        </NoticeTitle>
        <NoticeBody>
          <InfoIcon />
          <div>
            <p>人生(690571569)<br />你的帐号于19:47在另一地点登录了QQ，已<br />被迫下线。</p>
            <p>
              如果这不是你本人的操作，那么你的密码很可<br />
              能已泄露。建议你<a href="#">修改密码</a>或<a href="#">紧急冻结QQ</a>。
            </p>
          </div>
        </NoticeBody>
        <NoticeFoot>
          <NoticeButton>重新登录</NoticeButton>
          <NoticeButton $main>确定</NoticeButton>
        </NoticeFoot>
      </Notice>
    </Desktop>
  )
}

export default App
